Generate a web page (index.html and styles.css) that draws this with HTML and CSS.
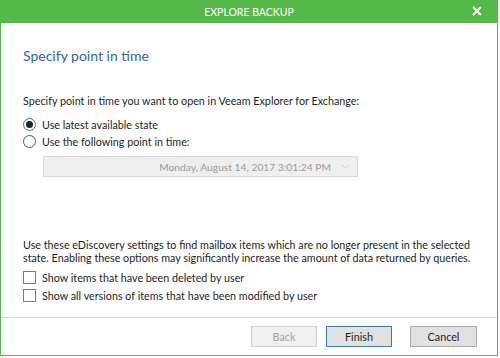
FILE: index.html
```html
<!DOCTYPE html>
<html lang="en">

<head>
  <meta charset="UTF-8">
  <title>Explore Backup</title>
  <link rel="stylesheet" href="styles.css">
</head>

<body>
  <div class="window">
    <div class="titlebar">
      <span class="title">EXPLORE BACKUP</span>
      <svg class="close" width="10" height="10" viewBox="0 0 10 10">
        <path d="M1 1 L9 9 M9 1 L1 9" stroke="#fff" stroke-width="2" fill="none" />
      </svg>
    </div>

    <div class="content">
      <h1>Specify point in time</h1>
      <p class="intro">Specify point in time you want to open in Veeam Explorer for Exchange:</p>

      <label class="option">
        <input type="radio" name="state" checked>
        <span>Use latest available state</span>
      </label>
      <label class="option">
        <input type="radio" name="state">
        <span>Use the following point in time:</span>
      </label>
      <div class="datepicker">
        <span class="date">Monday, August 14, 2017 3:01:24 PM</span>
        <svg class="chevron" width="9" height="6" viewBox="0 0 9 6">
          <path d="M1 1 L4.5 4.5 L8 1" stroke="#cfcfcf" stroke-width="1" fill="none" />
        </svg>
      </div>

      <div class="ediscovery">
        <p class="note">Use these eDiscovery settings to find mailbox items which are no longer present in the selected state. Enabling these options may significantly increase the amount of data returned by queries.</p>
        <label class="option check">
          <input type="checkbox">
          <span>Show items that have been deleted by user</span>
        </label>
        <label class="option check">
          <input type="checkbox">
          <span>Show all versions of items that have been modified by user</span>
        </label>
      </div>
    </div>

    <div class="footer">
      <button class="btn" disabled>Back</button>
      <button class="btn default">Finish</button>
      <button class="btn cancel">Cancel</button>
    </div>
  </div>
</body>

</html>
```

FILE: styles.css
```css
* {
  margin: 0;
  padding: 0;
  box-sizing: border-box;
}

body {
  font-family: Lato, "Noto Sans", sans-serif;
  font-size: 10.75px;
  color: #1e1e1e;
  background: #fff;
}

.window {
  width: 498px;
  height: 356px;
  display: flex;
  flex-direction: column;
  border: 1px solid #54b948;
  border-top: none;
}

.titlebar {
  height: 23px;
  margin: 0 -1px;
  background: #54b948;
  color: #fff;
  display: flex;
  align-items: center;
  justify-content: center;
  position: relative;
}

.title {
  font-size: 10.5px;
}

.close {
  position: absolute;
  right: 16px;
  top: 6px;
}

.content {
  flex: 1;
  display: flex;
  flex-direction: column;
  padding: 0 22px;
}

h1 {
  margin-top: 23px;
  font-size: 14px;
  font-weight: normal;
  line-height: 20px;
  color: #3561b0;
}

.intro {
  margin-top: 27px;
  line-height: 16px;
}

.intro + .option {
  margin-top: 7px;
}

.option {
  height: 17px;
  display: flex;
  align-items: center;
  gap: 6px;
}

.option input {
  appearance: none;
  width: 13px;
  height: 13px;
  border: 1px solid #555;
  background: #fff;
  flex: none;
  position: relative;
}

.option input[type="radio"] {
  border-radius: 50%;
}

.option input[type="radio"]:checked {
  border-color: #3b6fa8;
}

.option input[type="radio"]:checked::after {
  content: "";
  position: absolute;
  left: 2px;
  top: 2px;
  width: 7px;
  height: 7px;
  border-radius: 50%;
  background: #222;
}

.datepicker {
  margin: 6px 0 0 20px;
  width: 315px;
  height: 21px;
  background: #efefef;
  border: 1px solid #d9d9d9;
  display: flex;
  align-items: center;
  justify-content: flex-end;
  padding-right: 7px;
  gap: 10px;
  color: #9a9a9a;
}

.date {
  font-size: 10.25px;
}

.ediscovery {
  margin-top: auto;
  padding-bottom: 13px;
}

.note {
  line-height: 13px;
  margin-bottom: 4px;
}

.option.check {
  height: 18px;
}

.option.check input {
  border-color: #7a7a7a;
}

.footer {
  height: 38px;
  border-top: 1px solid #d6d6d6;
  display: flex;
  align-items: center;
  justify-content: flex-end;
  padding: 0 20px 1px 0;
}

.btn {
  width: 66px;
  height: 21px;
  font-family: inherit;
  font-size: 10.75px;
  color: #1e1e1e;
  background: #e1e1e1;
  border: 1px solid #adadad;
}

.btn:disabled {
  color: #a3a3a3;
  background: #f0f0f0;
  border-color: #d0d0d0;
}

.btn.default {
  margin-left: 9px;
  border-color: #3c7fb1;
}

.btn.cancel {
  margin-left: 18px;
  width: 67px;
}
```
